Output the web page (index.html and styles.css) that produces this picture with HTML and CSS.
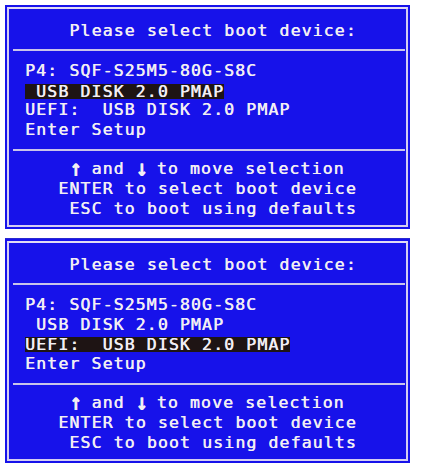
FILE: index.html
```html
<!DOCTYPE html>
<html lang="en">
<head>
    <meta charset="UTF-8">
    <title>Boot Menu</title>
    <link rel="stylesheet" href="styles.css">
</head>
<body>
    <div class="panel">
        <div class="frame">
            <div class="title"> Please select boot device:</div>
            <div class="rule"></div>
            <div class="devices">
                <div class="row">P4: SQF-S25M5-80G-S8C</div>
                <div class="row"><span class="selected"> USB DISK 2.0 PMAP</span></div>
                <div class="row">UEFI:  USB DISK 2.0 PMAP</div>
                <div class="row">Enter Setup</div>
            </div>
            <div class="rule"></div>
            <div class="help">
                <div class="row"><span class="arrow">↑</span> and <span class="arrow">↓</span> to move selection</div>
                <div class="row">ENTER to select boot device</div>
                <div class="row"> ESC to boot using defaults</div>
            </div>
        </div>
    </div>

    <div class="panel">
        <div class="frame">
            <div class="title"> Please select boot device:</div>
            <div class="rule"></div>
            <div class="devices">
                <div class="row">P4: SQF-S25M5-80G-S8C</div>
                <div class="row"> USB DISK 2.0 PMAP</div>
                <div class="row"><span class="selected">UEFI:  USB DISK 2.0 PMAP</span></div>
                <div class="row">Enter Setup</div>
            </div>
            <div class="rule"></div>
            <div class="help">
                <div class="row"><span class="arrow">↑</span> and <span class="arrow">↓</span> to move selection</div>
                <div class="row">ENTER to select boot device</div>
                <div class="row"> ESC to boot using defaults</div>
            </div>
        </div>
    </div>
</body>
</html>
```

FILE: styles.css
```css
:root {
    --bios-blue: #1712ea;
    --bios-text: #f2eef4;
    --frame-line: #d4cef2;
    --rule-line: #c9c4ea;
    --select-bg: #1e1414;
}

body {
    margin: 5px 0 0 5px;
    background-color: #ffffff;
    font-family: "DejaVu Sans Mono", "Liberation Mono", monospace;
    font-size: 16.5px;
    letter-spacing: 1.12px;
    color: var(--bios-text);
    /* slightly heavier strokes, like the BIOS bitmap font */
    text-shadow: 0.5px 0 0 currentColor;
}

.panel {
    width: 405px;
    box-sizing: border-box;
    padding: 2px;
    background-color: var(--bios-blue);
    box-shadow: 0 -1px 0 #2a2ad0;
}

.panel + .panel {
    margin-top: 10px;
}

.frame {
    border: 2px solid var(--frame-line);
    border-top-color: #e2dcf4;
}

.title {
    white-space: pre;
    text-align: center;
    line-height: 20px;
    padding: 12px 0 8px;
}

.rule {
    height: 2px;
    margin: 0 1px 0 4px;
    background-color: var(--rule-line);
}

.devices {
    padding: 10px 0 9px 16px;
}

.devices .row {
    white-space: pre;
    line-height: 19.7px;
}

.selected {
    display: inline-block;
    line-height: 15px;
    vertical-align: middle;
    background-color: var(--select-bg);
}

.help {
    padding: 8px 0 6px;
    text-align: center;
}

.help .row {
    white-space: pre;
    line-height: 20px;
}

.arrow {
    display: inline-block;
    width: 11.05px;
    margin-right: -1.12px;
    text-align: center;
    font-size: 18px;
    font-weight: bold;
    letter-spacing: 0;
    line-height: 20px;
    vertical-align: top;
    transform: translateY(-1px) scale(1.1, 1.3);
}
```
